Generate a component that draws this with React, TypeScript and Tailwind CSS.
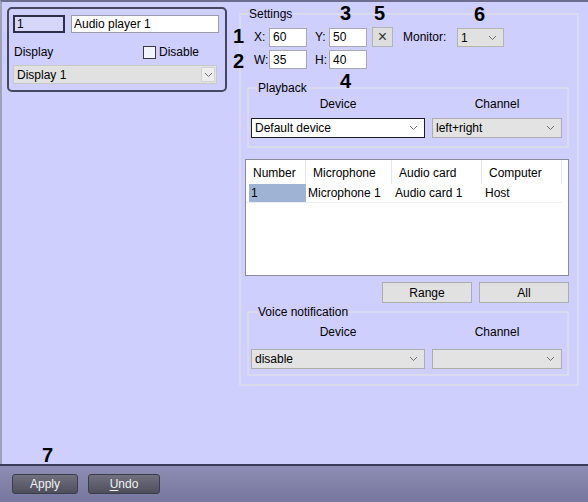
import type { ReactNode } from 'react';

function Chevron() {
  return (
    <svg width="9" height="6" viewBox="0 0 9 6" className="shrink-0">
      <path d="M1 1l3.5 3.5L8 1" fill="none" stroke="#707070" strokeWidth="1" />
    </svg>
  );
}

function Select({ value, className }: { value?: string; className: string }) {
  return (
    <div className={`flex items-center justify-between pl-[3px] pr-[6px] ${className}`}>
      <span>{value}</span>
      <Chevron />
    </div>
  );
}

function Group({ title, className, children }: { title: string; className: string; children: ReactNode }) {
  return (
    <fieldset className={`border-2 border-[#dadaee] ${className}`}>
      <legend className="ml-[6px] px-px leading-[14px]">{title}</legend>
      {children}
    </fieldset>
  );
}

function Mark({ n, className }: { n: string; className: string }) {
  return <span className={`absolute text-[20px] font-bold leading-none text-black ${className}`}>{n}</span>;
}

const field = 'flex h-[19px] w-[38px] items-center border border-[#a7a7b8] bg-white pl-[3px]';
const grayBtn = 'flex h-[21px] w-[90px] items-center justify-center border border-[#adadad] bg-[#e1e1e1]';

export default function App() {
  return (
    <div className="relative flex h-[502px] w-[588px] flex-col overflow-hidden bg-[#cfcffd] font-['Liberation_Sans',Arial,sans-serif] text-[12px] leading-[14px] text-black">
      <div className="flex min-h-0 flex-1 items-start border-t-2 border-l-2 border-t-[#6d6d90] border-l-[#a0a0b8]">
        {/* object card */}
        <div className="ml-[5px] mt-[5px] w-[220px] rounded-[5px] border-2 border-[#47475f] px-[4px] pb-[6px] pt-[6px]">
          <div className="flex gap-[6px]">
            <div className="flex h-[18px] w-[52px] items-center border-2 border-[#2e2e48] bg-[#d6d6f8] pl-[2px]">1</div>
            <div className="flex h-[18px] w-[148px] items-center border border-[#9a9aa8] bg-white pl-[2px]">Audio player 1</div>
          </div>
          <div className="mt-[12px] flex h-[14px] items-center">
            <span className="w-[130px] pl-px">Display</span>
            <span className="h-[13px] w-[13px] border border-[#3a3a3a] bg-[#f4f4ff]" />
            <span className="ml-[3px]">Disable</span>
          </div>
          <div className="mt-[6px] flex h-[19px] w-[204px] items-center justify-between border border-[#c8c8c8] bg-[#e1e1e1] pl-[3px] pr-px">
            <span>Display 1</span>
            <span className="flex h-[15px] w-[14px] items-center justify-center border border-[#d2d2d2] bg-[#ededed]">
              <Chevron />
            </span>
          </div>
        </div>

        {/* settings */}
        <Group title="Settings" className="ml-[12px] mt-[5px] w-[340px] pb-[8px] [&>legend]:ml-[7px]">
          <div className="mt-[6px] flex h-[20px] items-center pl-[13px]">
            <span className="w-[15px]">X:</span>
            <div className={field}>60</div>
            <span className="ml-[8px] w-[14px]">Y:</span>
            <div className={field}>50</div>
            <div className="ml-[5px] flex h-[20px] w-[21px] items-center justify-center border border-[#b4b4b4] bg-[#dedede] text-[16px] text-[#333]">×</div>
            <span className="ml-[10px] w-[54px]">Monitor:</span>
            <Select value="1" className="h-[19px] w-[47px] border border-[#b4b4b4] bg-[#e1e1e1] pt-[2px]" />
          </div>
          <div className="mt-[3px] flex h-[19px] items-center pl-[13px]">
            <span className="w-[15px]">W:</span>
            <div className={field}>35</div>
            <span className="ml-[8px] w-[14px]">H:</span>
            <div className={field}>40</div>
          </div>

          <Group title="Playback" className="ml-[6px] mt-[12px] w-[322px] pb-[8px] pl-[2px]">
            <div className="mt-[2px] grid grid-cols-[174px_130px] gap-x-[7px] gap-y-[7px]">
              <span className="text-center">Device</span>
              <span className="text-center">Channel</span>
              <Select value="Default device" className="h-[20px] border border-[#1e1e1e] bg-white" />
              <Select value="left+right" className="h-[20px] border border-[#adadad] bg-[#e3e3e3]" />
            </div>
          </Group>

          <div className="ml-[4px] mt-[11px] h-[117px] w-[324px] border border-[#8b8b9b] bg-white">
            <div className="flex h-[24px] items-center">
              <span className="h-full w-[60px] border-r border-[#e6e6e6] pl-[7px] pt-[6px]">Number</span>
              <span className="h-full w-[86px] border-r border-[#e6e6e6] pl-[7px] pt-[6px]">Microphone</span>
              <span className="h-full w-[90px] border-r border-[#e6e6e6] pl-[7px] pt-[6px]">Audio card</span>
              <span className="h-full w-[80px] border-r border-[#e6e6e6] pl-[7px] pt-[6px]">Computer</span>
            </div>
            <div className="flex h-[19px] w-[316px] items-center border-b border-[#ececec]">
              <span className="ml-[3px] flex h-full w-[57px] items-center bg-[#9fb4d4] pl-[2px]">1</span>
              <span className="w-[86px] pl-[2px]">Microphone 1</span>
              <span className="w-[90px] pl-[3px]">Audio card 1</span>
              <span className="w-[80px] pl-[3px]">Host</span>
            </div>
          </div>

          <div className="ml-[4px] mt-[6px] flex w-[324px] justify-end gap-[7px]">
            <div className={grayBtn}>Range</div>
            <div className={grayBtn}>All</div>
          </div>

          <Group title="Voice notification" className="ml-[6px] mt-[2px] w-[322px] pb-[5px] pl-[2px]">
            <div className="mt-[6px] grid grid-cols-[174px_130px] gap-x-[7px] gap-y-[10px]">
              <span className="text-center">Device</span>
              <span className="text-center">Channel</span>
              <Select value="disable" className="h-[20px] border border-[#adadad] bg-[#e3e3e3]" />
              <Select className="h-[20px] border border-[#adadad] bg-[#e3e3e3]" />
            </div>
          </Group>
        </Group>
      </div>

      {/* bottom bar */}
      <div className="flex h-[38px] shrink-0 gap-[10px] border-t-2 border-[#3c3c58] bg-linear-to-b from-[#8e8eb4] to-[#76769e] pl-[12px] pt-[8px]">
        <button className="flex h-[20px] w-[66px] items-center justify-center rounded-[3px] border border-[#3c3c4c] bg-linear-to-b from-[#70707e] to-[#4e4e5c] text-[#f2f2f2]">
          Apply
        </button>
        <button className="flex h-[20px] w-[72px] items-center justify-center rounded-[3px] border border-[#3c3c4c] bg-linear-to-b from-[#70707e] to-[#4e4e5c] text-[#f2f2f2]">
          <span className="underline underline-offset-2">U</span>ndo
        </button>
      </div>

      <Mark n="1" className="left-[233px] top-[26px]" />
      <Mark n="2" className="left-[233px] top-[51px]" />
      <Mark n="3" className="left-[340px] top-[3px]" />
      <Mark n="5" className="left-[374px] top-[3px]" />
      <Mark n="6" className="left-[474px] top-[4px]" />
      <Mark n="4" className="left-[340px] top-[71px]" />
      <Mark n="7" className="left-[42px] top-[445px]" />
    </div>
  );
}
